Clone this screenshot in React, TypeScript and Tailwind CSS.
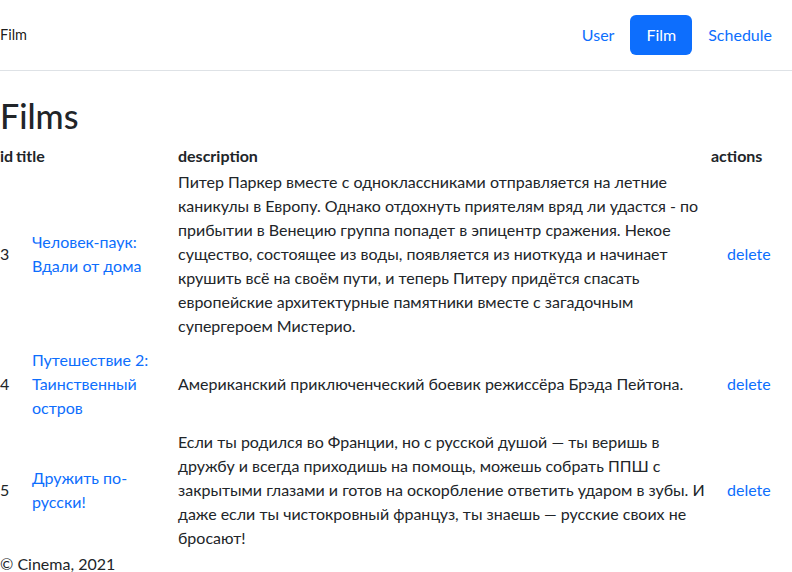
const FILMS = [
  {
    id: 3,
    title: ["Человек-паук:", "Вдали от дома"],
    description: [
      "Питер Паркер вместе с одноклассниками отправляется на летние",
      "каникулы в Европу. Однако отдохнуть приятелям вряд ли удастся - по",
      "прибытии в Венецию группа попадет в эпицентр сражения. Некое",
      "существо, состоящее из воды, появляется из ниоткуда и начинает",
      "крушить всё на своём пути, и теперь Питеру придётся спасать",
      "европейские архитектурные памятники вместе с загадочным",
      "супергероем Мистерио.",
    ],
  },
  {
    id: 4,
    title: ["Путешествие 2:", "Таинственный", "остров"],
    description: ["Американский приключенческий боевик режиссёра Брэда Пейтона."],
  },
  {
    id: 5,
    title: ["Дружить по-", "русски!"],
    description: [
      "Если ты родился во Франции, но с русской душой — ты веришь в",
      "дружбу и всегда приходишь на помощь, можешь собрать ППШ с",
      "закрытыми глазами и готов на оскорбление ответить ударом в зубы. И",
      "даже если ты чистокровный француз, ты знаешь — русские своих не",
      "бросают!",
    ],
  },
];

export default function App() {
  return (
    <div className="min-h-[572px] bg-white font-['Lato','Noto_Sans',sans-serif] text-[16px] leading-6 text-[#212529]">
      {/* Navbar */}
      <nav className="h-[71px] border-b border-[#dee2e6] flex items-center justify-between pr-1">
        <a href="#" className="text-[14.5px] text-black/90">Film</a>
        <ul className="flex items-center -mt-px">
          <li><a href="#" className="block px-4 py-2 text-[#0d6efd]">User</a></li>
          <li><a href="#" className="block px-4 py-2 rounded-md bg-[#0d6efd] text-white">Film</a></li>
          <li><a href="#" className="block px-4 py-2 text-[#0d6efd]">Schedule</a></li>
        </ul>
      </nav>

      <main>
        <h1 className="mt-[25px] mb-[7px] text-[34px] leading-[1.2] font-medium">Films</h1>

        <div className="grid grid-cols-[16px_162px_533px_81px] items-center">
          <div className="font-bold">id</div>
          <div className="font-bold">title</div>
          <div className="font-bold">description</div>
          <div className="font-bold">actions</div>

          {FILMS.map((f) => (
            <div key={f.id} className="contents">
              <div>{f.id}</div>
              <div>
                <a href="#" className="block px-4 py-2 text-[#0d6efd] whitespace-nowrap">
                  {f.title.map((t) => (
                    <span key={t} className="block">{t}</span>
                  ))}
                </a>
              </div>
              <div className="py-[2px] whitespace-nowrap">
                {f.description.map((line) => (
                  <span key={line} className="block">{line}</span>
                ))}
              </div>
              <div>
                <a href="#" className="block px-4 py-2 text-[#0d6efd]">delete</a>
              </div>
            </div>
          ))}
        </div>
      </main>

      <footer>© Cinema, 2021</footer>
    </div>
  );
}
